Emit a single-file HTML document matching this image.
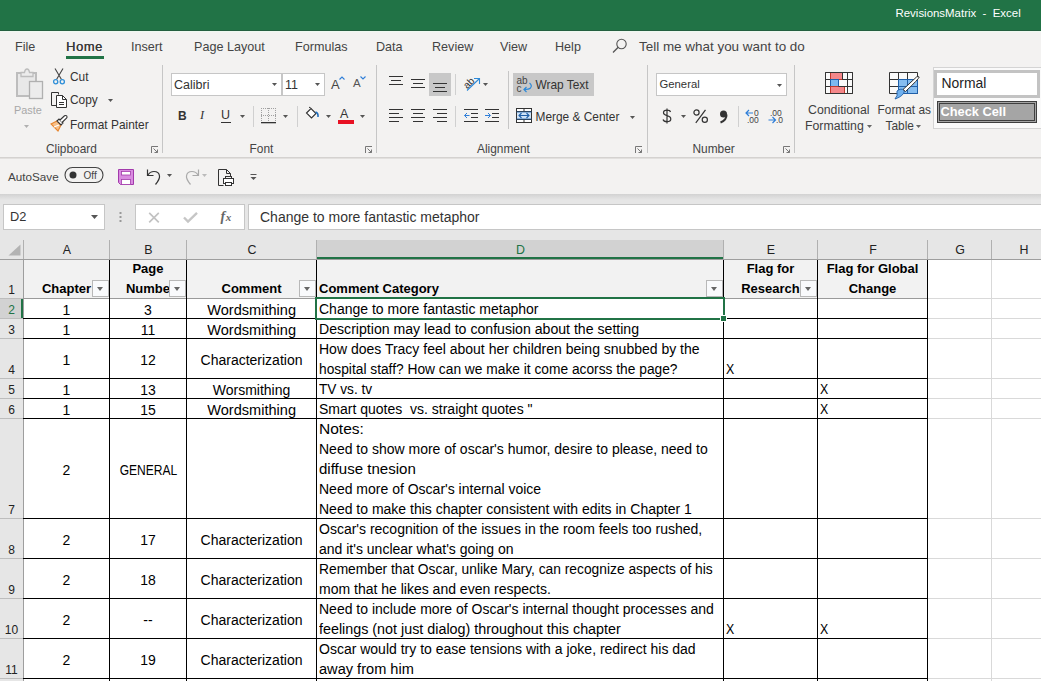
<!DOCTYPE html><html><head><meta charset="utf-8"><style>*{margin:0;padding:0;box-sizing:border-box}
html,body{width:1041px;height:681px;overflow:hidden;background:#fff;font-family:"Liberation Sans",sans-serif;color:#000}
.a{position:absolute}
.t{position:absolute;white-space:nowrap;line-height:1}
svg{position:absolute;overflow:visible}
.tab{position:absolute;top:39px;font-size:13px;color:#444;line-height:16px;white-space:nowrap}
.sep{position:absolute;width:1px;background:#c8c8c8}
.gl{position:absolute;top:142px;font-size:11.5px;color:#444;line-height:14px;white-space:nowrap}
.rt{position:absolute;font-size:12.5px;color:#333;line-height:14px;white-space:nowrap}
.cell{position:absolute;font-size:14px;line-height:20px;white-space:pre;overflow:hidden;color:#000}
.filt{position:absolute;width:17px;height:17px;background:#f9fafc;border:1px solid #b8b8b8}
.filt:after{content:"";position:absolute;left:3.5px;top:6px;border-left:3.5px solid transparent;border-right:3.5px solid transparent;border-top:4px solid #666}
</style></head><body>
<div class="a" style="left:0px;top:0px;width:1041px;height:31px;background:#217346;"></div>
<div class="t" style="left:895.5px;top:7.91px;font-size:11.45px;color:#fff;font-weight:normal;">RevisionsMatrix&nbsp; - &nbsp;Excel</div>
<div class="a" style="left:0px;top:31px;width:1041px;height:126px;background:#f3f2f1;"></div>
<div class="a" style="left:0px;top:30px;width:1041px;height:1px;background:#245f40;"></div>
<div class="a" style="left:0px;top:31px;width:1041px;height:1px;background:#eef8f0;"></div>
<div class="a" style="left:0px;top:157px;width:1041px;height:1px;background:#d4d2d0;"></div>
<div class="a" style="left:0px;top:158px;width:1041px;height:1px;background:#e2e0de;"></div>
<div class="a" style="left:0px;top:159px;width:1041px;height:35px;background:#f3f2f1;"></div>
<div class="a" style="left:0px;top:194px;width:1041px;height:46px;background:#e6e6e6;"></div>
<div class="a" style="left:0;top:194px;width:1041px;height:6px;background:linear-gradient(#d2d2d2,#e6e6e6)"></div>
<div class="t" style="left:15px;top:40.53px;font-size:12.6px;color:#444;font-weight:normal;">File</div>
<div class="t" style="left:131px;top:40.53px;font-size:12.6px;color:#444;font-weight:normal;">Insert</div>
<div class="t" style="left:194px;top:40.53px;font-size:12.6px;color:#444;font-weight:normal;">Page Layout</div>
<div class="t" style="left:295px;top:40.53px;font-size:12.6px;color:#444;font-weight:normal;">Formulas</div>
<div class="t" style="left:376px;top:40.53px;font-size:12.6px;color:#444;font-weight:normal;">Data</div>
<div class="t" style="left:432px;top:40.53px;font-size:12.6px;color:#444;font-weight:normal;">Review</div>
<div class="t" style="left:500px;top:40.53px;font-size:12.6px;color:#444;font-weight:normal;">View</div>
<div class="t" style="left:555px;top:40.53px;font-size:12.6px;color:#444;font-weight:normal;">Help</div>
<div class="t" style="left:66px;top:41.18px;font-size:12.9px;color:#3a3a3a;font-weight:normal;text-shadow:0.35px 0 0 #3a3a3a;letter-spacing:0.6px;">Home</div>
<div class="a" style="left:66px;top:56px;width:38px;height:3px;background:#217346;"></div>
<svg style="left:612px;top:38px" width="16" height="16" viewBox="0 0 16 16"><circle cx="9.5" cy="6" r="4.7" fill="none" stroke="#555" stroke-width="1.1"/><path d="M6.2 9.3L1 14.5" stroke="#555" stroke-width="1.3"/></svg>
<div class="t" style="left:639px;top:39.81px;font-size:13.45px;color:#444;font-weight:normal;">Tell me what you want to do</div>
<div class="a" style="left:3px;top:204px;width:102px;height:26px;background:#fff;border:1px solid #c6c6c6;"></div>
<div class="t" style="left:10px;top:211.16px;font-size:12.8px;color:#333;font-weight:normal;">D2</div>
<svg style="left:91.0px;top:214.5px" width="7" height="4"><path d="M0 0H7L3.5 4Z" fill="#555"/></svg>
<svg style="left:119px;top:212px" width="3" height="11"><rect x="0.5" y="0" width="2" height="2" fill="#999"/><rect x="0.5" y="4" width="2" height="2" fill="#999"/><rect x="0.5" y="8" width="2" height="2" fill="#999"/></svg>
<div class="a" style="left:135px;top:204px;width:110px;height:26px;background:#fff;border:1px solid #c6c6c6;"></div>
<svg style="left:148px;top:212px" width="12" height="11"><path d="M1.2 0.8L10.8 10.3M10.8 0.8L1.2 10.3" stroke="#c2c2c2" stroke-width="1.7"/></svg>
<svg style="left:183px;top:212px" width="15" height="11"><path d="M1 5.5L5 9.5L14 0.8" fill="none" stroke="#c6c6c6" stroke-width="2.4"/></svg>
<div class="t" style="left:220.5px;top:210.15px;font-size:14px;color:#666;font-weight:bold;font-family:Liberation Serif,serif;letter-spacing:0.5px;"><i>f</i><span style="font-size:11px"><i>x</i></span></div>
<div class="a" style="left:248px;top:204px;width:797px;height:26px;background:#fff;border:1px solid #c6c6c6;"></div>
<div class="t" style="left:260px;top:210.15px;font-size:14px;color:#333;font-weight:normal;">Change to more fantastic metaphor</div>
<div class="a" style="left:162px;top:65px;width:1px;height:88px;background:#c6c6c6"></div>
<div class="a" style="left:376px;top:65px;width:1px;height:88px;background:#c6c6c6"></div>
<div class="a" style="left:647px;top:65px;width:1px;height:88px;background:#c6c6c6"></div>
<div class="a" style="left:794px;top:65px;width:1px;height:88px;background:#c6c6c6"></div>
<svg style="left:15px;top:68px" width="30" height="32" viewBox="0 0 30 32"><rect x="2" y="5" width="19" height="23" fill="#e8e8e8" stroke="#bdbdbd" stroke-width="2"/><path d="M6 8.5V4.5H9.5Q10 1 12 1Q14 1 14.5 4.5H18V8.5Z" fill="#ececec" stroke="#bdbdbd" stroke-width="1.3"/><rect x="14.5" y="13.5" width="13" height="17" fill="#ececec" stroke="#b0b0b0" stroke-width="1.3"/></svg>
<div class="t" style="left:14px;top:104.77px;font-size:10.9px;color:#a8a8a8;font-weight:normal;">Paste</div>
<svg style="left:24.0px;top:124.5px" width="5" height="3"><path d="M0 0H5L2.5 3Z" fill="#b0b0b0"/></svg>
<svg style="left:53px;top:68px" width="12" height="17" viewBox="0 0 12 17"><path d="M2 0.5L8.5 11.5M10 0.5L3.5 11.5" stroke="#444" stroke-width="1.1" fill="none"/><circle cx="2.7" cy="13.7" r="2.1" fill="none" stroke="#2f8fd8" stroke-width="1.3"/><circle cx="9.3" cy="13.7" r="2.1" fill="none" stroke="#2f8fd8" stroke-width="1.3"/></svg>
<div class="t" style="left:70px;top:71.93px;font-size:11.9px;color:#333;font-weight:normal;">Cut</div>
<svg style="left:50px;top:91px" width="18" height="18" viewBox="0 0 18 18"><path d="M8.5 3.5V1.5H1.5V14.5H6.5" fill="none" stroke="#333"/><path d="M6.5 4.5H12.5L16.5 8.5V16.5H6.5Z" fill="#fff" stroke="#333"/><path d="M12.5 4.5V8.5H16.5M9 11.5H14M9 13.5H14" fill="none" stroke="#333"/></svg>
<div class="t" style="left:70px;top:95.43px;font-size:11.9px;color:#333;font-weight:normal;">Copy</div>
<svg style="left:108.0px;top:99px" width="5" height="3"><path d="M0 0H5L2.5 3Z" fill="#555"/></svg>
<svg style="left:50px;top:115px" width="18" height="18" viewBox="0 0 18 18"><path d="M1 9L7 6L11 10L8 16Z" fill="#f7c08a" stroke="#e8862e" stroke-width="1.1"/><path d="M4 12L9 10" stroke="#fff" stroke-width="1.2"/><path d="M7 6L9 4L13 8L11 10Z" fill="#fff" stroke="#333" stroke-width="1.1"/><path d="M10 5L14.5 0.8Q16 0 16.8 1Q17.5 2 16.5 3.2L12 7.5" fill="#fff" stroke="#333" stroke-width="1.1"/></svg>
<div class="t" style="left:70px;top:119.63px;font-size:11.9px;color:#333;font-weight:normal;">Format Painter</div>
<div class="t" style="left:46px;top:143.93px;font-size:11.9px;color:#444;font-weight:normal;">Clipboard</div>
<svg style="left:151px;top:146px" width="8" height="8" viewBox="0 0 8 8"><path d="M0.5 7V0.5H7" fill="none" stroke="#777" stroke-width="1"/><path d="M2.5 2.5L6.5 6.5M3.5 6.5H6.5V3.5" fill="none" stroke="#777" stroke-width="1"/></svg>
<div class="a" style="left:171px;top:73px;width:111px;height:23px;background:#fff;border:1px solid #c6c6c6;"></div>
<div class="a" style="left:282px;top:73px;width:43px;height:23px;background:#fff;border:1px solid #c6c6c6;"></div>
<div class="t" style="left:174px;top:78.92px;font-size:12.5px;color:#333;font-weight:normal;">Calibri</div>
<svg style="left:272.0px;top:83px" width="5" height="3"><path d="M0 0H5L2.5 3Z" fill="#555"/></svg>
<div class="t" style="left:285px;top:78.92px;font-size:12.5px;color:#333;font-weight:normal;">11</div>
<svg style="left:315.0px;top:83px" width="5" height="3"><path d="M0 0H5L2.5 3Z" fill="#555"/></svg>
<div class="t" style="left:331px;top:77.50px;font-size:13px;color:#444;font-weight:normal;">A</div>
<svg style="left:339px;top:76px" width="6" height="4"><path d="M0.5 3.5L3 1L5.5 3.5" fill="none" stroke="#2f7ed8" stroke-width="1.1"/></svg>
<div class="t" style="left:353px;top:78.27px;font-size:11.5px;color:#555;font-weight:normal;">A</div>
<svg style="left:360px;top:76px" width="6" height="4"><path d="M0.5 0.5L3 3L5.5 0.5" fill="none" stroke="#2f7ed8" stroke-width="1.1"/></svg>
<div class="t" style="left:178px;top:109.84px;font-size:12px;color:#333;font-weight:bold;">B</div>
<div class="t" style="left:200px;top:109.42px;font-size:12.5px;color:#333;font-weight:normal;font-style:italic;font-family:Liberation Serif,serif;">I</div>
<div class="t" style="left:221px;top:109.42px;font-size:12.5px;color:#333;font-weight:normal;">U</div>
<div class="a" style="left:221px;top:122px;width:10px;height:1px;background:#333;"></div>
<svg style="left:240.0px;top:115px" width="5" height="3"><path d="M0 0H5L2.5 3Z" fill="#555"/></svg>
<div class="a" style="left:253px;top:106px;width:1px;height:21px;background:#d0d0d0"></div>
<svg style="left:261px;top:108px" width="16" height="16"><rect x="0" y="0" width="1" height="1" fill="#a0a0a0"/><rect x="0" y="7" width="1" height="1" fill="#a0a0a0"/><rect x="2" y="0" width="1" height="1" fill="#a0a0a0"/><rect x="2" y="7" width="1" height="1" fill="#a0a0a0"/><rect x="4" y="0" width="1" height="1" fill="#a0a0a0"/><rect x="4" y="7" width="1" height="1" fill="#a0a0a0"/><rect x="6" y="0" width="1" height="1" fill="#a0a0a0"/><rect x="6" y="7" width="1" height="1" fill="#a0a0a0"/><rect x="8" y="0" width="1" height="1" fill="#a0a0a0"/><rect x="8" y="7" width="1" height="1" fill="#a0a0a0"/><rect x="10" y="0" width="1" height="1" fill="#a0a0a0"/><rect x="10" y="7" width="1" height="1" fill="#a0a0a0"/><rect x="12" y="0" width="1" height="1" fill="#a0a0a0"/><rect x="12" y="7" width="1" height="1" fill="#a0a0a0"/><rect x="14" y="0" width="1" height="1" fill="#a0a0a0"/><rect x="14" y="7" width="1" height="1" fill="#a0a0a0"/><rect x="0" y="0" width="1" height="1" fill="#a0a0a0"/><rect x="7" y="0" width="1" height="1" fill="#a0a0a0"/><rect x="14" y="0" width="1" height="1" fill="#a0a0a0"/><rect x="0" y="2" width="1" height="1" fill="#a0a0a0"/><rect x="7" y="2" width="1" height="1" fill="#a0a0a0"/><rect x="14" y="2" width="1" height="1" fill="#a0a0a0"/><rect x="0" y="4" width="1" height="1" fill="#a0a0a0"/><rect x="7" y="4" width="1" height="1" fill="#a0a0a0"/><rect x="14" y="4" width="1" height="1" fill="#a0a0a0"/><rect x="0" y="6" width="1" height="1" fill="#a0a0a0"/><rect x="7" y="6" width="1" height="1" fill="#a0a0a0"/><rect x="14" y="6" width="1" height="1" fill="#a0a0a0"/><rect x="0" y="8" width="1" height="1" fill="#a0a0a0"/><rect x="7" y="8" width="1" height="1" fill="#a0a0a0"/><rect x="14" y="8" width="1" height="1" fill="#a0a0a0"/><rect x="0" y="10" width="1" height="1" fill="#a0a0a0"/><rect x="7" y="10" width="1" height="1" fill="#a0a0a0"/><rect x="14" y="10" width="1" height="1" fill="#a0a0a0"/><rect x="0" y="12" width="1" height="1" fill="#a0a0a0"/><rect x="7" y="12" width="1" height="1" fill="#a0a0a0"/><rect x="14" y="12" width="1" height="1" fill="#a0a0a0"/><rect x="0" y="14" width="1" height="1" fill="#a0a0a0"/><rect x="7" y="14" width="1" height="1" fill="#a0a0a0"/><rect x="14" y="14" width="1" height="1" fill="#a0a0a0"/><rect x="0" y="14" width="15" height="1.3" fill="#333"/></svg>
<svg style="left:283.0px;top:115px" width="5" height="3"><path d="M0 0H5L2.5 3Z" fill="#555"/></svg>
<div class="a" style="left:297px;top:106px;width:1px;height:21px;background:#d0d0d0"></div>
<svg style="left:305px;top:107px" width="15" height="13" viewBox="0 0 15 13"><path d="M1.5 6L6 1.5L11 6.5L6.5 11Z" fill="#fff" stroke="#333" stroke-width="1.1"/><path d="M4 0.5Q5 -0.5 6 1.5" fill="none" stroke="#333"/><path d="M10.5 5Q13.5 6 13 10" fill="none" stroke="#1f6fc0" stroke-width="1.6"/></svg>
<svg style="left:326.0px;top:115px" width="5" height="3"><path d="M0 0H5L2.5 3Z" fill="#555"/></svg>
<div class="t" style="left:340px;top:107.92px;font-size:12.5px;color:#333;font-weight:normal;">A</div>
<div class="a" style="left:338px;top:120px;width:16px;height:4px;background:#e81123;"></div>
<svg style="left:360.0px;top:115px" width="5" height="3"><path d="M0 0H5L2.5 3Z" fill="#555"/></svg>
<div class="t" style="left:249.5px;top:143.93px;font-size:11.9px;color:#444;font-weight:normal;">Font</div>
<svg style="left:365px;top:146px" width="8" height="8" viewBox="0 0 8 8"><path d="M0.5 7V0.5H7" fill="none" stroke="#777" stroke-width="1"/><path d="M2.5 2.5L6.5 6.5M3.5 6.5H6.5V3.5" fill="none" stroke="#777" stroke-width="1"/></svg>
<svg style="left:389px;top:76px" width="15" height="9"><rect x="0" y="0" width="14" height="1" fill="#333"/><rect x="2" y="4" width="10" height="1" fill="#333"/><rect x="0" y="8" width="14" height="1" fill="#333"/></svg>
<svg style="left:411px;top:79px" width="15" height="10"><rect x="0" y="0" width="14" height="1" fill="#333"/><rect x="2" y="4" width="10" height="1" fill="#333"/><rect x="0" y="8" width="14" height="1" fill="#333"/></svg>
<div class="a" style="left:429px;top:73px;width:22px;height:23px;background:#c8c8c8;"></div>
<svg style="left:433px;top:81px" width="15" height="11"><rect x="0" y="2" width="14" height="1" fill="#333"/><rect x="2" y="6" width="10" height="1" fill="#333"/><rect x="0" y="10" width="14" height="1" fill="#333"/></svg>
<div class="a" style="left:455px;top:74px;width:1px;height:21px;background:#d0d0d0"></div>
<svg style="left:462px;top:75px" width="19" height="17" viewBox="0 0 19 17"><text x="1" y="12" font-size="10" font-family="Liberation Sans" fill="#333" transform="rotate(-45 6 8)">ab</text><path d="M5 15.5L17 4M12 3.5H17.5V9" fill="none" stroke="#2f8ad8" stroke-width="1.1"/></svg>
<svg style="left:483.0px;top:83px" width="5" height="3"><path d="M0 0H5L2.5 3Z" fill="#555"/></svg>
<div class="a" style="left:508px;top:71px;width:1px;height:58px;background:#c6c6c6"></div>
<div class="a" style="left:513px;top:73px;width:81px;height:23px;background:#c8c8c8;"></div>
<svg style="left:517px;top:76px" width="16" height="17" viewBox="0 0 16 17"><text x="-0.5" y="7.5" font-size="10" font-family="Liberation Sans" fill="#444">ab</text><text x="-0.5" y="15.5" font-size="10" font-family="Liberation Sans" fill="#444">c</text><path d="M12.5 7Q15.5 9.5 13.5 12Q12 13.5 7 13.5M9.5 11L7 13.5L9.5 16" fill="none" stroke="#2f8ad8" stroke-width="1.2"/></svg>
<div class="t" style="left:535.5px;top:79.53px;font-size:11.9px;color:#333;font-weight:normal;">Wrap Text</div>
<svg style="left:389px;top:109px" width="15" height="13"><rect x="0" y="0" width="14" height="1" fill="#333"/><rect x="0" y="4" width="10" height="1" fill="#333"/><rect x="0" y="8" width="14" height="1" fill="#333"/><rect x="0" y="12" width="10" height="1" fill="#333"/></svg>
<svg style="left:411px;top:109px" width="15" height="13"><rect x="0" y="0" width="14" height="1" fill="#333"/><rect x="2" y="4" width="10" height="1" fill="#333"/><rect x="0" y="8" width="14" height="1" fill="#333"/><rect x="2" y="12" width="10" height="1" fill="#333"/></svg>
<svg style="left:433px;top:109px" width="15" height="13"><rect x="0" y="0" width="14" height="1" fill="#333"/><rect x="4" y="4" width="10" height="1" fill="#333"/><rect x="0" y="8" width="14" height="1" fill="#333"/><rect x="4" y="12" width="10" height="1" fill="#333"/></svg>
<div class="a" style="left:455px;top:106px;width:1px;height:21px;background:#d0d0d0"></div>
<svg style="left:464px;top:109px" width="15" height="13"><rect x="0" y="0" width="14" height="1" fill="#333"/><rect x="7" y="4" width="7" height="1" fill="#333"/><rect x="7" y="8" width="7" height="1" fill="#333"/><rect x="0" y="12" width="14" height="1" fill="#333"/><path d="M5.5 6.5H0.5M3 4L0.5 6.5L3 9" fill="none" stroke="#2f7ed8" stroke-width="1"/></svg>
<svg style="left:485px;top:109px" width="15" height="13"><rect x="0" y="0" width="14" height="1" fill="#333"/><rect x="7" y="4" width="7" height="1" fill="#333"/><rect x="7" y="8" width="7" height="1" fill="#333"/><rect x="0" y="12" width="14" height="1" fill="#333"/><path d="M0 6.5H5M3 4L5.5 6.5L3 9" fill="none" stroke="#2f7ed8" stroke-width="1"/></svg>
<svg style="left:516px;top:108px" width="16" height="16" viewBox="0 0 16 16"><rect x="0.5" y="0.5" width="15" height="14" fill="#fff" stroke="#333"/><rect x="1" y="4" width="14" height="7" fill="#cfe3f7"/><path d="M0.5 3.5H15.5M0.5 11.5H15.5M8 0.5V3.5M8 11.5V14.5" stroke="#333" stroke-width="1"/><path d="M0.5 4H15.5M0.5 11H15.5" stroke="#1f5fa8" stroke-width="0.8"/><path d="M3 7.5H13M5.5 5L3 7.5L5.5 10M10.5 5L13 7.5L10.5 10" fill="none" stroke="#1f5fa8" stroke-width="1.1"/></svg>
<div class="t" style="left:535.5px;top:111.53px;font-size:11.9px;color:#333;font-weight:normal;">Merge &amp; Center</div>
<svg style="left:630.0px;top:115.5px" width="5" height="3"><path d="M0 0H5L2.5 3Z" fill="#555"/></svg>
<div class="t" style="left:477px;top:143.93px;font-size:11.9px;color:#444;font-weight:normal;">Alignment</div>
<svg style="left:635px;top:146px" width="8" height="8" viewBox="0 0 8 8"><path d="M0.5 7V0.5H7" fill="none" stroke="#777" stroke-width="1"/><path d="M2.5 2.5L6.5 6.5M3.5 6.5H6.5V3.5" fill="none" stroke="#777" stroke-width="1"/></svg>
<div class="a" style="left:656px;top:73px;width:131px;height:23px;background:#fff;border:1px solid #c6c6c6;"></div>
<div class="t" style="left:659.5px;top:79.43px;font-size:11.3px;color:#333;font-weight:normal;">General</div>
<svg style="left:777.0px;top:83.5px" width="5" height="3"><path d="M0 0H5L2.5 3Z" fill="#555"/></svg>
<svg style="left:662px;top:108px" width="10" height="16" viewBox="0 0 10 16"><path d="M8.5 4Q8 2.2 5 2.2Q1.5 2.2 1.5 4.8Q1.5 6.8 5 7.6Q8.8 8.5 8.8 11Q8.8 13.6 5 13.6Q1.6 13.6 1 11.5M5 0.5V15.5" fill="none" stroke="#333" stroke-width="1.2"/></svg>
<svg style="left:681.0px;top:115px" width="5" height="3"><path d="M0 0H5L2.5 3Z" fill="#555"/></svg>
<svg style="left:693px;top:109px" width="16" height="15" viewBox="0 0 16 15"><circle cx="3.5" cy="3.5" r="2.6" fill="none" stroke="#333" stroke-width="1.2"/><circle cx="11.8" cy="10.8" r="2.6" fill="none" stroke="#333" stroke-width="1.2"/><path d="M12.5 0.8L2.8 13.8" stroke="#333" stroke-width="1.2"/></svg>
<svg style="left:719px;top:110px" width="9" height="13" viewBox="0 0 9 13"><circle cx="4.5" cy="4" r="3.5" fill="#333"/><path d="M7.5 4.5Q7.8 10 1.5 12.5" fill="none" stroke="#333" stroke-width="2"/></svg>
<div class="a" style="left:738px;top:106px;width:1px;height:21px;background:#d0d0d0"></div>
<svg style="left:745px;top:108px" width="17" height="16" viewBox="0 0 17 16"><path d="M1 5H8M4 2L1 5L4 8" fill="none" stroke="#2f7ed8" stroke-width="1.2"/><text x="9" y="8" font-size="8.5" font-family="Liberation Sans" fill="#444">0</text><text x="2" y="15" font-size="8.5" font-family="Liberation Sans" fill="#444">.00</text></svg>
<svg style="left:768px;top:108px" width="17" height="16" viewBox="0 0 17 16"><text x="2" y="8" font-size="8.5" font-family="Liberation Sans" fill="#444">.00</text><path d="M0.5 12H7.5M4.5 9L7.5 12L4.5 15" fill="none" stroke="#2f7ed8" stroke-width="1.2"/><text x="8" y="15" font-size="8.5" font-family="Liberation Sans" fill="#444">.0</text></svg>
<div class="t" style="left:692.5px;top:143.93px;font-size:11.9px;color:#444;font-weight:normal;">Number</div>
<svg style="left:783px;top:146px" width="8" height="8" viewBox="0 0 8 8"><path d="M0.5 7V0.5H7" fill="none" stroke="#777" stroke-width="1"/><path d="M2.5 2.5L6.5 6.5M3.5 6.5H6.5V3.5" fill="none" stroke="#777" stroke-width="1"/></svg>
<svg style="left:824px;top:71px" width="30" height="24" viewBox="0 0 30 24"><rect x="1.5" y="1.5" width="27" height="21" fill="#fafafa"/><rect x="6.5" y="1.5" width="12" height="7" fill="#f4878a" stroke="#c0392b"/><rect x="6.5" y="8.5" width="8" height="7" fill="#7db9ef" stroke="#1f5fa8"/><rect x="6.5" y="15.5" width="14" height="7" fill="#f4878a" stroke="#c0392b"/><path d="M1.5 1.5H28.5V22.5H1.5Z M1.5 8.5H6M1.5 15.5H6M18.5 8.5H28.5M14.5 15.5H28.5M18.5 1.5V8.5M23.5 1.5V22.5" fill="none" stroke="#333" stroke-width="1"/><path d="M1.5 1.5H28.5V22.5H1.5Z" fill="none" stroke="#333" stroke-width="1"/></svg>
<div class="t" style="left:808px;top:103.59px;font-size:12.3px;color:#3f3f3f;font-weight:normal;">Conditional</div>
<div class="t" style="left:805px;top:120.09px;font-size:12.3px;color:#3f3f3f;font-weight:normal;">Formatting</div>
<svg style="left:867.0px;top:125px" width="5" height="3"><path d="M0 0H5L2.5 3Z" fill="#666"/></svg>
<svg style="left:888px;top:71px" width="34" height="30" viewBox="0 0 34 30"><rect x="1.5" y="1.5" width="28" height="21" fill="#fafafa"/><rect x="10.5" y="8.5" width="19" height="14" fill="#86bdf0"/><path d="M1.5 1.5H29.5V22.5H1.5Z M1.5 8.5H10.5M1.5 15.5H10.5M10.5 1.5V8.5M19.5 1.5V8.5" fill="none" stroke="#333" stroke-width="1"/><path d="M10.5 8.5H29.5V22.5H10.5Z M10.5 15.5H29.5M19.5 8.5V22.5" fill="none" stroke="#1f5fa8" stroke-width="1"/><path d="M9 20Q13 16.5 16.5 19.5Q16 25 7 28Q10 25 9 20Z" fill="#6fb0ee" stroke="#1f5fa8" stroke-width="0.9"/><path d="M15 18.5L28.5 6Q30.5 4.8 31.2 6Q31.2 7.5 17.5 20.5Z" fill="#fff" stroke="#333" stroke-width="1"/></svg>
<div class="t" style="left:877.5px;top:104.93px;font-size:11.9px;color:#3f3f3f;font-weight:normal;">Format as</div>
<div class="t" style="left:885.5px;top:120.93px;font-size:11.9px;color:#3f3f3f;font-weight:normal;">Table</div>
<svg style="left:916.0px;top:125px" width="5" height="3"><path d="M0 0H5L2.5 3Z" fill="#666"/></svg>
<div class="a" style="left:933px;top:67px;width:112px;height:62px;background:#fafafa;border:1px solid #d4d4d4;"></div>
<div class="a" style="left:934px;top:70px;width:106px;height:28px;background:#fff;border:1px solid #c3c3c3;border-width:3px;"></div>
<div class="t" style="left:941.5px;top:76.73px;font-size:13.9px;color:#222;font-weight:normal;">Normal</div>
<div class="a" style="left:937px;top:101px;width:100px;height:22px;background:#a5a5a5;border:1px solid #3f3f3f;border:3px double #3f3f3f;"></div>
<div class="t" style="left:940.5px;top:105.66px;font-size:12.8px;color:#fff;font-weight:bold;">Check Cell</div>
<div class="t" style="left:8px;top:170.60px;font-size:11.7px;color:#444;font-weight:normal;">AutoSave</div>
<svg style="left:64px;top:166px" width="40" height="18" viewBox="0 0 40 18"><rect x="1" y="1.5" width="38" height="15" rx="7.5" fill="#f3f2f1" stroke="#444" stroke-width="1.1"/><circle cx="9" cy="9" r="3.5" fill="#333"/></svg>
<div class="t" style="left:83.5px;top:171.03px;font-size:10px;color:#444;font-weight:normal;">Off</div>
<svg style="left:118px;top:169px" width="17" height="17" viewBox="0 0 17 17"><path d="M0.5 0.5H15.5V15.5H2.5L0.5 13.5Z" fill="#d98be0" stroke="#a23aab"/><rect x="3.5" y="2.5" width="9" height="3.5" fill="#fff" stroke="#a23aab" stroke-width="0.8"/><rect x="3.5" y="10.5" width="9" height="5" fill="#fff" stroke="#a23aab" stroke-width="0.8"/></svg>
<svg style="left:146px;top:168px" width="18" height="18" viewBox="0 0 18 18"><path d="M1.5 1.5V7.5H7.5" fill="none" stroke="#333" stroke-width="1.2"/><path d="M1.8 7.2Q4 3.5 8 3.5Q13 3.5 13.5 8Q14 11 9.5 16.5" fill="none" stroke="#333" stroke-width="1.2"/></svg>
<svg style="left:167.0px;top:174px" width="5" height="3"><path d="M0 0H5L2.5 3Z" fill="#555"/></svg>
<svg style="left:182px;top:168px" width="18" height="18" viewBox="0 0 18 18"><path d="M16.5 1.5V7.5H10.5" fill="none" stroke="#aaa" stroke-width="1.2"/><path d="M16.2 7.2Q14 3.5 10 3.5Q5 3.5 4.5 8Q4 11 8.5 16.5" fill="none" stroke="#aaa" stroke-width="1.2"/></svg>
<svg style="left:202.0px;top:174px" width="5" height="3"><path d="M0 0H5L2.5 3Z" fill="#bbb"/></svg>
<svg style="left:218px;top:169px" width="16" height="17" viewBox="0 0 16 17"><path d="M0.5 0.5H8.5L12.5 4.5V7.5M5.5 16.5H0.5V0.5" fill="none" stroke="#333"/><path d="M8.5 0.5V4.5H12.5" fill="none" stroke="#333"/><rect x="5.5" y="9.5" width="10" height="5" fill="#fff" stroke="#333"/><rect x="7.5" y="7.5" width="6" height="2" fill="none" stroke="#333"/><rect x="7.5" y="13.5" width="6" height="3" fill="#fff" stroke="#333"/></svg>
<svg style="left:250px;top:174px" width="7" height="7"><rect x="0.5" y="0" width="6" height="1" fill="#555"/><path d="M0.5 3H6.5L3.5 6Z" fill="#555"/></svg>
<div class="a" style="left:0;top:240px;width:1041px;height:441px;background:#fff"></div>
<div class="a" style="left:0;top:240px;width:1041px;height:19px;background:#e6e6e6"></div>
<div class="a" style="left:0;top:259px;width:23px;height:422px;background:#e6e6e6"></div>
<svg style="left:8px;top:244px" width="13" height="12"><path d="M12.5 0.5V11.5H0.5Z" fill="#b3b3b3"/></svg>
<div class="a" style="left:317px;top:240px;width:406px;height:19px;background:#d2d2d2"></div>
<div class="a" style="left:316px;top:257px;width:408px;height:2px;background:#217346"></div>
<div class="a" style="left:0;top:299px;width:23px;height:19px;background:#d2d2d2"></div>
<div class="a" style="left:21px;top:298px;width:2px;height:21px;background:#217346"></div>
<div class="a" style="left:24px;top:260px;width:903px;height:38px;background:#f2f2f2"></div>
<div class="a" style="left:927px;top:259px;width:1px;height:422px;background:#d9d9d9"></div>
<div class="a" style="left:991px;top:259px;width:1px;height:422px;background:#d9d9d9"></div>
<div class="a" style="left:927px;top:298px;width:114px;height:1px;background:#d9d9d9"></div>
<div class="a" style="left:927px;top:318px;width:114px;height:1px;background:#d9d9d9"></div>
<div class="a" style="left:927px;top:338px;width:114px;height:1px;background:#d9d9d9"></div>
<div class="a" style="left:927px;top:378px;width:114px;height:1px;background:#d9d9d9"></div>
<div class="a" style="left:927px;top:398px;width:114px;height:1px;background:#d9d9d9"></div>
<div class="a" style="left:927px;top:418px;width:114px;height:1px;background:#d9d9d9"></div>
<div class="a" style="left:927px;top:518px;width:114px;height:1px;background:#d9d9d9"></div>
<div class="a" style="left:927px;top:558px;width:114px;height:1px;background:#d9d9d9"></div>
<div class="a" style="left:927px;top:598px;width:114px;height:1px;background:#d9d9d9"></div>
<div class="a" style="left:927px;top:638px;width:114px;height:1px;background:#d9d9d9"></div>
<div class="a" style="left:927px;top:678px;width:114px;height:1px;background:#d9d9d9"></div>
<div class="a" style="left:927px;top:720px;width:114px;height:1px;background:#d9d9d9"></div>
<div class="a" style="left:23px;top:240px;width:1px;height:19px;background:#b0b0b0"></div>
<div class="a" style="left:109px;top:240px;width:1px;height:19px;background:#b0b0b0"></div>
<div class="a" style="left:186px;top:240px;width:1px;height:19px;background:#b0b0b0"></div>
<div class="a" style="left:316px;top:240px;width:1px;height:19px;background:#b0b0b0"></div>
<div class="a" style="left:723px;top:240px;width:1px;height:19px;background:#b0b0b0"></div>
<div class="a" style="left:817px;top:240px;width:1px;height:19px;background:#b0b0b0"></div>
<div class="a" style="left:927px;top:240px;width:1px;height:19px;background:#b0b0b0"></div>
<div class="a" style="left:991px;top:240px;width:1px;height:19px;background:#b0b0b0"></div>
<div class="a" style="left:0;top:259px;width:1041px;height:1px;background:#9e9e9e"></div>
<div class="a" style="left:0;top:298px;width:23px;height:1px;background:#bdbdbd"></div>
<div class="a" style="left:0;top:318px;width:23px;height:1px;background:#bdbdbd"></div>
<div class="a" style="left:0;top:338px;width:23px;height:1px;background:#bdbdbd"></div>
<div class="a" style="left:0;top:378px;width:23px;height:1px;background:#bdbdbd"></div>
<div class="a" style="left:0;top:398px;width:23px;height:1px;background:#bdbdbd"></div>
<div class="a" style="left:0;top:418px;width:23px;height:1px;background:#bdbdbd"></div>
<div class="a" style="left:0;top:518px;width:23px;height:1px;background:#bdbdbd"></div>
<div class="a" style="left:0;top:558px;width:23px;height:1px;background:#bdbdbd"></div>
<div class="a" style="left:0;top:598px;width:23px;height:1px;background:#bdbdbd"></div>
<div class="a" style="left:0;top:638px;width:23px;height:1px;background:#bdbdbd"></div>
<div class="a" style="left:0;top:678px;width:23px;height:1px;background:#bdbdbd"></div>
<div class="a" style="left:0;top:720px;width:23px;height:1px;background:#bdbdbd"></div>
<div class="a" style="left:23px;top:259px;width:1px;height:422px;background:#9e9e9e"></div>
<div class="a" style="left:23px;top:298px;width:905px;height:1px;background:#9a9a9a"></div>
<div class="a" style="left:23px;top:318px;width:905px;height:1px;background:#000"></div>
<div class="a" style="left:23px;top:338px;width:905px;height:1px;background:#000"></div>
<div class="a" style="left:23px;top:378px;width:905px;height:1px;background:#000"></div>
<div class="a" style="left:23px;top:398px;width:905px;height:1px;background:#000"></div>
<div class="a" style="left:23px;top:418px;width:905px;height:1px;background:#000"></div>
<div class="a" style="left:23px;top:518px;width:905px;height:1px;background:#000"></div>
<div class="a" style="left:23px;top:558px;width:905px;height:1px;background:#000"></div>
<div class="a" style="left:23px;top:598px;width:905px;height:1px;background:#000"></div>
<div class="a" style="left:23px;top:638px;width:905px;height:1px;background:#000"></div>
<div class="a" style="left:23px;top:678px;width:905px;height:1px;background:#000"></div>
<div class="a" style="left:23px;top:720px;width:905px;height:1px;background:#000"></div>
<div class="a" style="left:109px;top:260px;width:1px;height:422px;background:#000"></div>
<div class="a" style="left:186px;top:260px;width:1px;height:422px;background:#000"></div>
<div class="a" style="left:316px;top:260px;width:1px;height:422px;background:#000"></div>
<div class="a" style="left:723px;top:260px;width:1px;height:422px;background:#000"></div>
<div class="a" style="left:817px;top:260px;width:1px;height:422px;background:#000"></div>
<div class="a" style="left:927px;top:260px;width:1px;height:422px;background:#000"></div>
<div class="t" style="left:24px;width:86px;top:243px;font-size:12.4px;line-height:14px;text-align:center;color:#222">A</div>
<div class="t" style="left:110px;width:77px;top:243px;font-size:12.4px;line-height:14px;text-align:center;color:#222">B</div>
<div class="t" style="left:187px;width:130px;top:243px;font-size:12.4px;line-height:14px;text-align:center;color:#222">C</div>
<div class="t" style="left:317px;width:407px;top:243px;font-size:12.4px;line-height:14px;text-align:center;color:#217346">D</div>
<div class="t" style="left:724px;width:94px;top:243px;font-size:12.4px;line-height:14px;text-align:center;color:#222">E</div>
<div class="t" style="left:818px;width:110px;top:243px;font-size:12.4px;line-height:14px;text-align:center;color:#222">F</div>
<div class="t" style="left:928px;width:64px;top:243px;font-size:12.4px;line-height:14px;text-align:center;color:#222">G</div>
<div class="t" style="left:992px;width:64px;top:243px;font-size:12.4px;line-height:14px;text-align:center;color:#222">H</div>
<div class="t" style="left:0;width:23px;top:283px;font-size:12px;line-height:14px;text-align:center;color:#222">1</div>
<div class="t" style="left:0;width:23px;top:303px;font-size:12px;line-height:14px;text-align:center;color:#217346">2</div>
<div class="t" style="left:0;width:23px;top:323px;font-size:12px;line-height:14px;text-align:center;color:#222">3</div>
<div class="t" style="left:0;width:23px;top:363px;font-size:12px;line-height:14px;text-align:center;color:#222">4</div>
<div class="t" style="left:0;width:23px;top:383px;font-size:12px;line-height:14px;text-align:center;color:#222">5</div>
<div class="t" style="left:0;width:23px;top:403px;font-size:12px;line-height:14px;text-align:center;color:#222">6</div>
<div class="t" style="left:0;width:23px;top:503px;font-size:12px;line-height:14px;text-align:center;color:#222">7</div>
<div class="t" style="left:0;width:23px;top:543px;font-size:12px;line-height:14px;text-align:center;color:#222">8</div>
<div class="t" style="left:0;width:23px;top:583px;font-size:12px;line-height:14px;text-align:center;color:#222">9</div>
<div class="t" style="left:0;width:23px;top:623px;font-size:12px;line-height:14px;text-align:center;color:#222">10</div>
<div class="t" style="left:0;width:23px;top:663px;font-size:12px;line-height:14px;text-align:center;color:#222">11</div>
<div class="cell" style="left:27px;width:79px;top:300px;height:20px;text-align:center;">1</div>
<div class="cell" style="left:113px;width:70px;top:300px;height:20px;text-align:center;">3</div>
<div class="cell" style="left:190px;width:123px;top:300px;height:20px;text-align:center;"><span style="display:inline-block;transform:scaleX(1.04);transform-origin:center">Wordsmithing</span></div>
<div class="cell" style="left:319px;width:402px;top:299px;height:20px;text-align:left;">Change to more fantastic metaphor</div>
<div class="cell" style="left:27px;width:79px;top:320px;height:20px;text-align:center;">1</div>
<div class="cell" style="left:113px;width:70px;top:320px;height:20px;text-align:center;">11</div>
<div class="cell" style="left:190px;width:123px;top:320px;height:20px;text-align:center;"><span style="display:inline-block;transform:scaleX(1.04);transform-origin:center">Wordsmithing</span></div>
<div class="cell" style="left:319px;width:402px;top:319px;height:20px;text-align:left;"><span style="display:inline-block;transform:scaleX(1.008);transform-origin:left">Description may lead to confusion about the setting</span></div>
<div class="cell" style="left:27px;width:79px;top:350px;height:20px;text-align:center;">1</div>
<div class="cell" style="left:113px;width:70px;top:350px;height:20px;text-align:center;">12</div>
<div class="cell" style="left:190px;width:123px;top:350px;height:20px;text-align:center;">Characterization</div>
<div class="cell" style="left:319px;width:402px;top:339px;height:40px;text-align:left;">How does Tracy feel about her children being snubbed by the<br><span style="display:inline-block;transform:scaleX(0.983);transform-origin:left">hospital staff? How can we make it come acorss the page?</span></div>
<div class="cell" style="left:726px;width:89px;top:359px;height:20px;text-align:left;"><span style="display:inline-block;transform:scaleX(0.88);transform-origin:left">X</span></div>
<div class="cell" style="left:27px;width:79px;top:380px;height:20px;text-align:center;">1</div>
<div class="cell" style="left:113px;width:70px;top:380px;height:20px;text-align:center;">13</div>
<div class="cell" style="left:190px;width:123px;top:380px;height:20px;text-align:center;">Worsmithing</div>
<div class="cell" style="left:319px;width:402px;top:379px;height:20px;text-align:left;"><span style="display:inline-block;transform:scaleX(0.975);transform-origin:left">TV vs. tv</span></div>
<div class="cell" style="left:820px;width:105px;top:379px;height:20px;text-align:left;"><span style="display:inline-block;transform:scaleX(0.88);transform-origin:left">X</span></div>
<div class="cell" style="left:27px;width:79px;top:400px;height:20px;text-align:center;">1</div>
<div class="cell" style="left:113px;width:70px;top:400px;height:20px;text-align:center;">15</div>
<div class="cell" style="left:190px;width:123px;top:400px;height:20px;text-align:center;"><span style="display:inline-block;transform:scaleX(1.04);transform-origin:center">Wordsmithing</span></div>
<div class="cell" style="left:319px;width:402px;top:399px;height:20px;text-align:left;">Smart quotes  vs. straight quotes &quot;</div>
<div class="cell" style="left:820px;width:105px;top:399px;height:20px;text-align:left;"><span style="display:inline-block;transform:scaleX(0.88);transform-origin:left">X</span></div>
<div class="cell" style="left:27px;width:79px;top:460px;height:20px;text-align:center;">2</div>
<div class="cell" style="left:113px;width:70px;top:460px;height:20px;text-align:center;"><span style="display:inline-block;transform:scaleX(0.86);transform-origin:center">GENERAL</span></div>
<div class="cell" style="left:319px;width:402px;top:419px;height:100px;text-align:left;"><span style="display:inline-block;transform:scaleX(1.11);transform-origin:left">Notes:</span><br>Need to show more of oscar&#x27;s humor, desire to please, need to<br><span style="display:inline-block;transform:scaleX(1.075);transform-origin:left">diffuse tnesion</span><br>Need more of Oscar&#x27;s internal voice<br>Need to make this chapter consistent with edits in Chapter 1</div>
<div class="cell" style="left:27px;width:79px;top:530px;height:20px;text-align:center;">2</div>
<div class="cell" style="left:113px;width:70px;top:530px;height:20px;text-align:center;">17</div>
<div class="cell" style="left:190px;width:123px;top:530px;height:20px;text-align:center;">Characterization</div>
<div class="cell" style="left:319px;width:402px;top:519px;height:40px;text-align:left;">Oscar&#x27;s recognition of the issues in the room feels too rushed,<br>and it&#x27;s unclear what&#x27;s going on</div>
<div class="cell" style="left:27px;width:79px;top:570px;height:20px;text-align:center;">2</div>
<div class="cell" style="left:113px;width:70px;top:570px;height:20px;text-align:center;">18</div>
<div class="cell" style="left:190px;width:123px;top:570px;height:20px;text-align:center;">Characterization</div>
<div class="cell" style="left:319px;width:402px;top:559px;height:40px;text-align:left;"><span style="display:inline-block;transform:scaleX(0.985);transform-origin:left">Remember that Oscar, unlike Mary, can recognize aspects of his</span><br>mom that he likes and even respects.</div>
<div class="cell" style="left:27px;width:79px;top:610px;height:20px;text-align:center;">2</div>
<div class="cell" style="left:113px;width:70px;top:610px;height:20px;text-align:center;">--</div>
<div class="cell" style="left:190px;width:123px;top:610px;height:20px;text-align:center;">Characterization</div>
<div class="cell" style="left:319px;width:402px;top:599px;height:40px;text-align:left;">Need to include more of Oscar&#x27;s internal thought processes and<br><span style="display:inline-block;transform:scaleX(1.023);transform-origin:left">feelings (not just dialog) throughout this chapter</span></div>
<div class="cell" style="left:726px;width:89px;top:619px;height:20px;text-align:left;"><span style="display:inline-block;transform:scaleX(0.88);transform-origin:left">X</span></div>
<div class="cell" style="left:820px;width:105px;top:619px;height:20px;text-align:left;"><span style="display:inline-block;transform:scaleX(0.88);transform-origin:left">X</span></div>
<div class="cell" style="left:27px;width:79px;top:650px;height:20px;text-align:center;">2</div>
<div class="cell" style="left:113px;width:70px;top:650px;height:20px;text-align:center;">19</div>
<div class="cell" style="left:190px;width:123px;top:650px;height:20px;text-align:center;">Characterization</div>
<div class="cell" style="left:319px;width:402px;top:639px;height:40px;text-align:left;">Oscar would try to ease tensions with a joke, redirect his dad<br><span style="display:inline-block;transform:scaleX(1.042);transform-origin:left">away from him</span></div>
<div class="cell" style="left:27px;width:79px;top:279px;height:20px;text-align:center;font-weight:bold;font-size:13px;">Chapter</div>
<div class="cell" style="left:113px;width:70px;top:259px;height:40px;text-align:center;font-weight:bold;font-size:13px;">Page<br>Numbe</div>
<div class="cell" style="left:190px;width:123px;top:279px;height:20px;text-align:center;font-weight:bold;font-size:13px;">Comment</div>
<div class="cell" style="left:319px;width:402px;top:279px;height:20px;text-align:left;font-weight:bold;font-size:13px;">Comment Category</div>
<div class="cell" style="left:727px;width:87px;top:259px;height:40px;text-align:center;font-weight:bold;font-size:13px;">Flag for<br>Research</div>
<div class="cell" style="left:821px;width:103px;top:259px;height:40px;text-align:center;font-weight:bold;font-size:13px;">Flag for Global<br>Change</div>
<div class="filt" style="left:92px;top:280px"></div>
<div class="filt" style="left:169px;top:280px"></div>
<div class="filt" style="left:299px;top:280px"></div>
<div class="filt" style="left:706px;top:280px"></div>
<div class="filt" style="left:800px;top:280px"></div>
<div class="a" style="left:315px;top:297px;width:410px;height:23px;border:2px solid #217346"></div>
<div class="a" style="left:720px;top:315px;width:7px;height:7px;background:#217346;border:1px solid #fff"></div>
</body></html>
